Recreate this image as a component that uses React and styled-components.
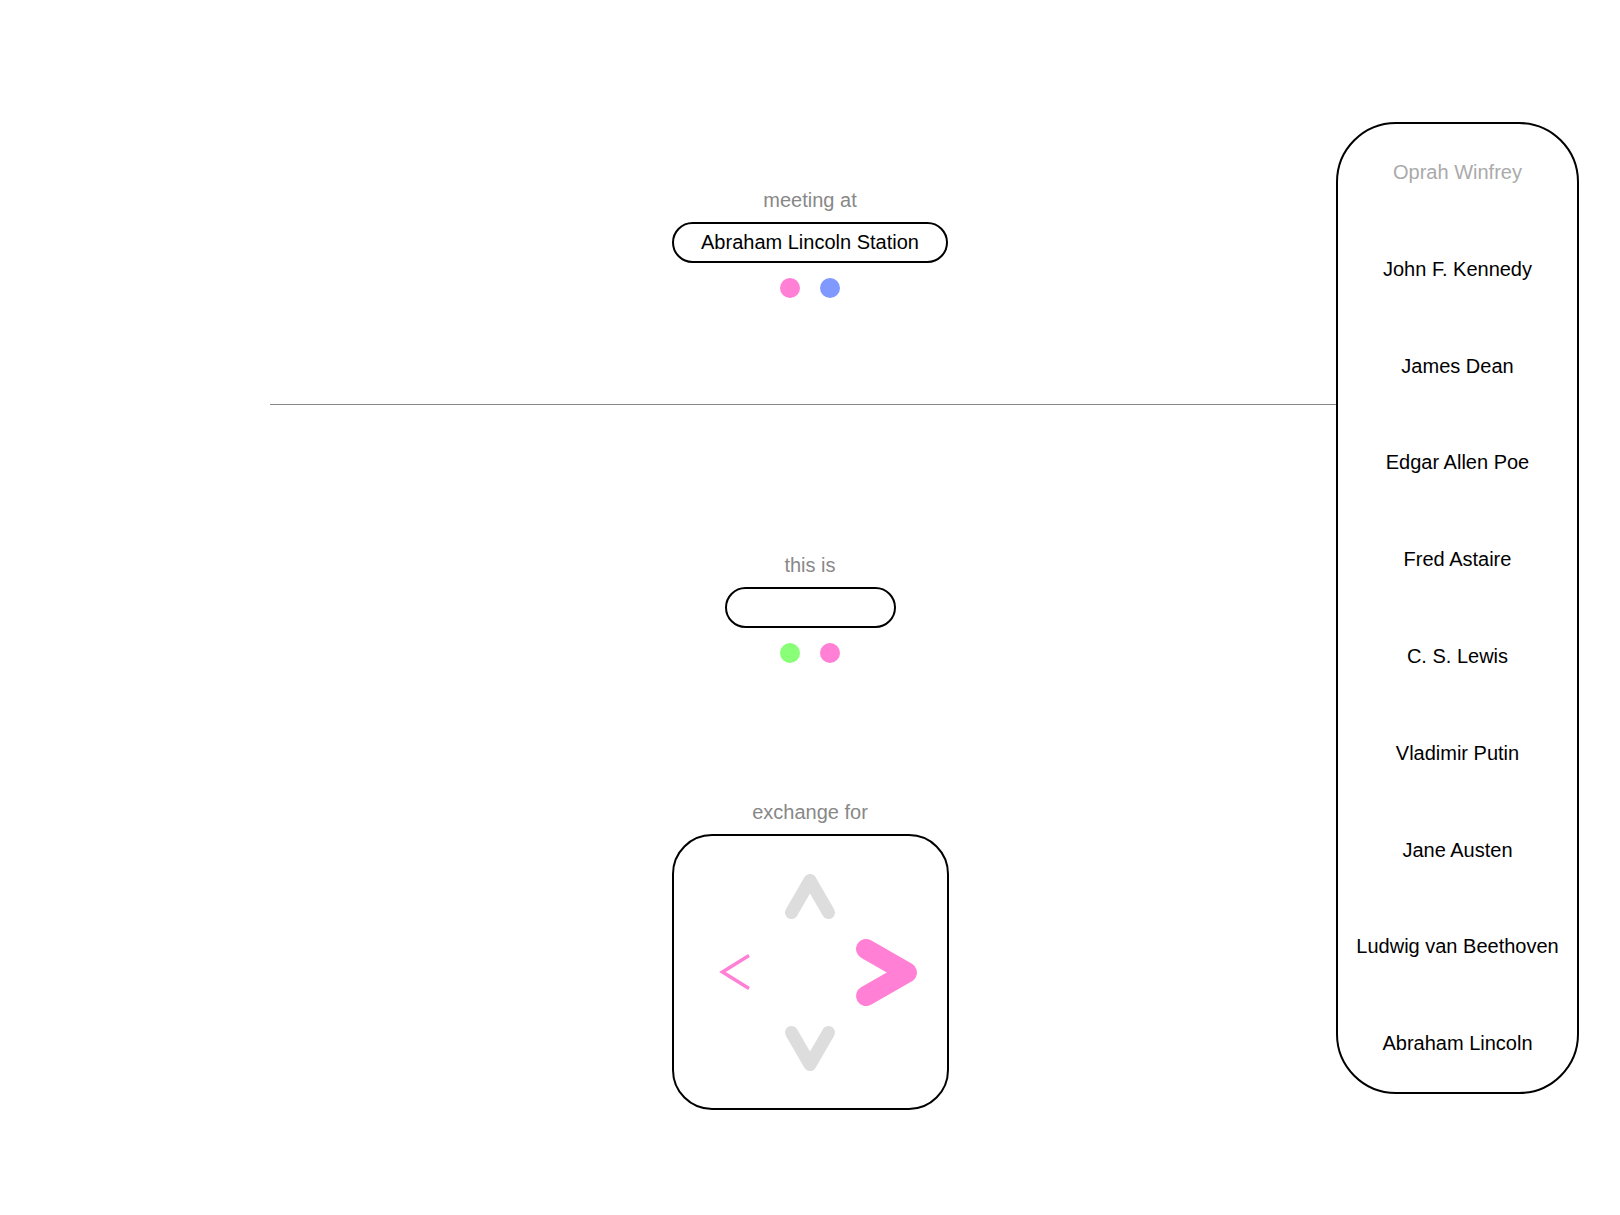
import React from 'react';
import styled, { createGlobalStyle } from 'styled-components';

const GlobalStyle = createGlobalStyle`
  body {
    margin: 0;
    background: #ffffff;
    font-family: "Liberation Sans", Arial, sans-serif;
  }
`;

const Page = styled.div`
  position: relative;
  width: 1620px;
  height: 1215px;
  overflow: hidden;
`;

const Column = styled.div`
  width: 1080px;
  margin-left: 270px;
  padding-top: 188px;
  display: flex;
  flex-direction: column;
  align-items: center;
`;

const Section = styled.div`
  display: flex;
  flex-direction: column;
  align-items: center;
  margin-top: ${(p) => p.$top || 0}px;
`;

const Label = styled.div`
  font-size: 20px;
  line-height: 24px;
  color: #888888;
`;

const Field = styled.div`
  box-sizing: border-box;
  margin-top: 10px;
  min-width: 171px;
  height: 41px;
  padding: 0 27px;
  border: 2px solid #000;
  border-radius: 21px;
  font-size: 20px;
  line-height: 37px;
  color: #000;
  text-align: center;
`;

const Dots = styled.div`
  display: flex;
  gap: 20px;
  margin-top: 15px;
`;

const Dot = styled.span`
  width: 20px;
  height: 20px;
  border-radius: 50%;
  background: ${(p) => p.$color};
`;

const Divider = styled.hr`
  width: 100%;
  height: 1px;
  margin: 106px 0 0;
  border: 0;
  background: #888888;
`;

const Pad = styled.div`
  box-sizing: border-box;
  margin-top: 10px;
  width: 277px;
  height: 276px;
  border: 2px solid #000;
  border-radius: 40px;
  display: grid;
  grid-template-columns: repeat(3, 76px);
  grid-template-rows: repeat(3, 76px);
  place-content: center;
  place-items: center;
`;

const Arrow = styled.svg`
  grid-column: ${(p) => p.$col};
  grid-row: ${(p) => p.$row};
  overflow: visible;
`;

const List = styled.ul`
  position: absolute;
  top: 122px;
  left: 1336px;
  width: 243px;
  box-sizing: border-box;
  margin: 0;
  padding: 0;
  list-style: none;
  border: 2px solid #000;
  border-radius: 60px;
  background: #fff;
`;

const Person = styled.li`
  height: 96.8px;
  line-height: 96.8px;
  text-align: center;
  font-size: 20px;
  color: ${(p) => (p.$dim ? '#aaaaaa' : '#000')};
  white-space: nowrap;
`;

const PINK = '#ff80d5';
const GRAY = '#dddddd';

const people = [
  'Oprah Winfrey',
  'John F. Kennedy',
  'James Dean',
  'Edgar Allen Poe',
  'Fred Astaire',
  'C. S. Lewis',
  'Vladimir Putin',
  'Jane Austen',
  'Ludwig van Beethoven',
  'Abraham Lincoln',
];

export default function App() {
  return (
    <Page>
      <GlobalStyle />
      <Column>
        <Section>
          <Label>meeting at</Label>
          <Field>Abraham Lincoln Station</Field>
          <Dots>
            <Dot $color="#ff80d5" />
            <Dot $color="#8099ff" />
          </Dots>
        </Section>
        <Divider />
        <Section $top={148}>
          <Label>this is</Label>
          <Field />
          <Dots>
            <Dot $color="#88ff77" />
            <Dot $color="#ff80d5" />
          </Dots>
        </Section>
        <Section $top={137}>
          <Label>exchange for</Label>
          <Pad>
            <Arrow $col={2} $row={1} width="50" height="45" viewBox="0 0 50 45">
              <polyline points="6.5,38.5 25,6.5 43.5,38.5" fill="none" stroke={GRAY} strokeWidth="13" strokeLinecap="round" strokeLinejoin="round" />
            </Arrow>
            <Arrow $col={1} $row={2} width="31" height="36" viewBox="0 0 31 36">
              <polyline points="30,1.5 3.5,18 30,34.5" fill="none" stroke={PINK} strokeWidth="3.5" strokeLinejoin="miter" />
            </Arrow>
            <Arrow $col={3} $row={2} width="60" height="67" viewBox="0 0 60 67">
              <polyline points="10,10 51,33.5 10,57" fill="none" stroke={PINK} strokeWidth="20" strokeLinecap="round" strokeLinejoin="round" />
            </Arrow>
            <Arrow $col={2} $row={3} width="50" height="45" viewBox="0 0 50 45">
              <polyline points="6.5,6.5 25,38.5 43.5,6.5" fill="none" stroke={GRAY} strokeWidth="13" strokeLinecap="round" strokeLinejoin="round" />
            </Arrow>
          </Pad>
        </Section>
      </Column>
      <List>
        {people.map((name, i) => (
          <Person key={name} $dim={i === 0}>
            {name}
          </Person>
        ))}
      </List>
    </Page>
  );
}
